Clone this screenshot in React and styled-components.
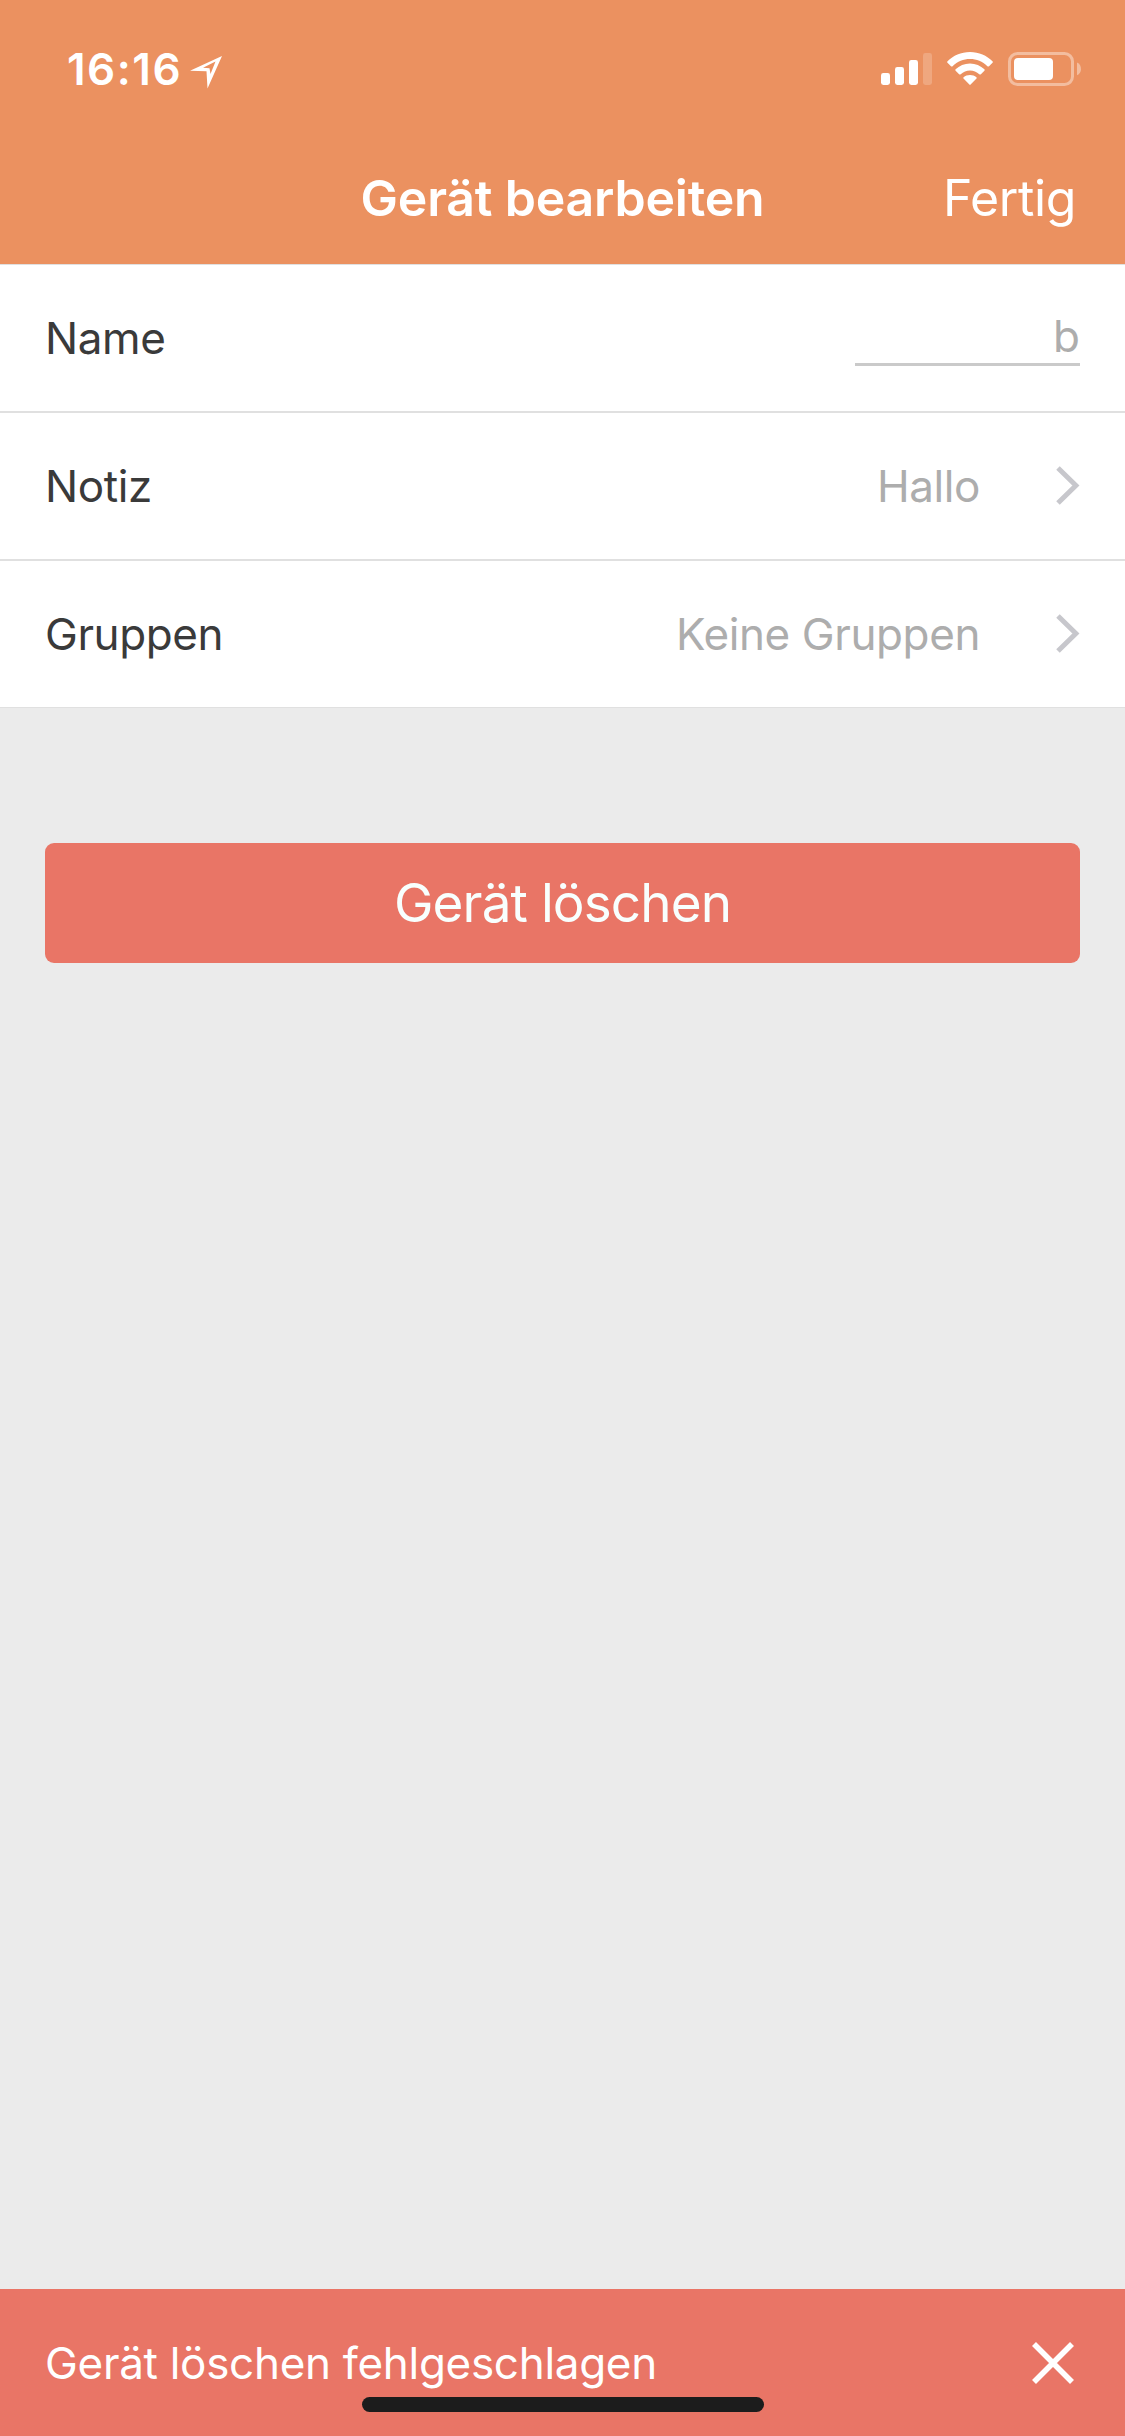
import React from 'react';
import styled, { createGlobalStyle, ThemeProvider } from "styled-components";

const theme = {
  colors: {
    header: '#eb9160',
    danger: '#e97566',
    page: '#ebebeb',
    line: '#e0e0e0',
    text: '#3a3a3a',
    value: '#adadad',
    chevron: '#c7c7cc',
  },
}

const GlobalStyle = createGlobalStyle`
  * {
    box-sizing: border-box;
  }
  body {
    margin: 0;
    font-family: Inter, "Liberation Sans", sans-serif;
    -webkit-font-smoothing: antialiased;
  }
`

const Screen = styled.div`
  display: flex;
  flex-direction: column;
  width: 1125px;
  height: 2436px;
  background: ${({ theme }) => theme.colors.page};
`

const Header = styled.header`
  height: 265px;
  color: #fff;
  background: ${({ theme }) => theme.colors.header};
  border-bottom: 1px solid ${({ theme }) => theme.colors.line};
`

const StatusBar = styled.div`
  display: flex;
  align-items: center;
  justify-content: space-between;
  height: 132px;
  padding: 6px 44px 0 67px;
`

const StatusTime = styled.div`
  display: flex;
  align-items: center;
  gap: 7px;
  font-size: 44px;
  font-weight: 600;
  line-height: 60px;
  letter-spacing: 1.5px;
`

const StatusIcons = styled.div`
  display: flex;
  align-items: center;
  gap: 15px;
`

const NavBar = styled.div`
  display: grid;
  grid-template-columns: 1fr auto 1fr;
  align-items: center;
  height: 132px;
  padding: 0 49px;
`

const NavTitle = styled.h1`
  grid-column: 2;
  margin: 0;
  font-size: 50px;
  font-weight: 600;
  line-height: 60px;
  letter-spacing: -0.2px;
`

const NavAction = styled.button`
  justify-self: end;
  padding: 0;
  border: none;
  background: none;
  color: inherit;
  font: inherit;
  font-size: 50px;
  line-height: 60px;
  letter-spacing: -0.4px;
`

const Row = styled.div`
  display: flex;
  align-items: center;
  height: 148px;
  padding: 0 45px;
  background: #fff;
  border-bottom: 2px solid ${({ theme }) => theme.colors.line};

  &:last-child {
    height: 147px;
    border-bottom-width: 1px;
  }
`

const RowLabel = styled.div`
  flex: 1;
  color: ${({ theme }) => theme.colors.text};
  font-size: 44px;
  line-height: 54px;
  letter-spacing: -0.4px;
`

const RowValue = styled.div`
  color: ${({ theme }) => theme.colors.value};
  font-size: 44px;
  line-height: 54px;
  letter-spacing: -0.4px;
  margin-right: 76px;
`

const RowInput = styled.input`
  width: 225px;
  height: 56px;
  padding: 0 0 2px;
  border: none;
  border-bottom: 3px solid #cacaca;
  outline: none;
  background: none;
  color: ${({ theme }) => theme.colors.value};
  font: inherit;
  font-size: 44px;
  text-align: right;
`

const DeleteButton = styled.button`
  height: 120px;
  margin: 135px 45px 0;
  padding: 0;
  border: none;
  border-radius: 9px;
  background: ${({ theme }) => theme.colors.danger};
  color: #f8fffe;
  font: inherit;
  font-size: 53px;
  letter-spacing: -0.9px;
`

const Toast = styled.div`
  position: relative;
  display: flex;
  align-items: center;
  justify-content: space-between;
  height: 147px;
  margin-top: auto;
  padding: 0 51px 0 45px;
  background: ${({ theme }) => theme.colors.danger};
  color: #fff;
  font-size: 44px;
  line-height: 54px;
  letter-spacing: -0.3px;
`

const HomeIndicator = styled.div`
  position: absolute;
  left: 362px;
  bottom: 24px;
  width: 402px;
  height: 15px;
  border-radius: 8px;
  background: #1c1c1c;
`

const Icon = styled.svg`
  display: block;
  flex: none;
`

const ArrowIcon = styled(Icon)`
  margin-top: 6px;
`

function LocationIcon() {
  return (
    <ArrowIcon width="34" height="34" viewBox="0 0 34 34">
      <path fill="#fff" fillRule="evenodd" d="M33 1 L1 15.8 L17.5 16.2 L18.5 33.5 Z M26.5 6.5 L14 12.8 L20.5 13.2 L21.5 19 Z" />
    </ArrowIcon>
  )
}

function SignalIcon() {
  return (
    <Icon width="51" height="34" viewBox="0 0 51 34" fill="#fff">
      <rect x="0" y="21" width="9" height="12" rx="2.4" />
      <rect x="14" y="15" width="9" height="18" rx="2.4" />
      <rect x="28" y="8" width="9" height="25" rx="2.4" />
      <rect x="42" y="1" width="9" height="32" rx="2.4" opacity="0.2" />
    </Icon>
  )
}

function WifiIcon() {
  return (
    <Icon width="46" height="34" viewBox="0 0 46 34" fill="#fff">
      <path d="M23 0 C32 0 39.8 3.6 45.5 9.2 Q46.2 10 45.5 10.8 L42 14.2 Q41.2 14.9 40.4 14.2 C35.5 9.5 29.6 7 23 7 C16.4 7 10.5 9.5 5.6 14.2 Q4.8 14.9 4 14.2 L0.5 10.8 Q-0.2 10 0.5 9.2 C6.2 3.6 14 0 23 0 Z" />
      <path d="M23 11.4 C28.6 11.4 33.6 13.6 37.4 17.2 Q38.1 17.9 37.4 18.7 L33.9 22.2 Q33.1 22.9 32.3 22.2 C29.7 19.8 26.5 18.4 23 18.4 C19.5 18.4 16.3 19.8 13.7 22.2 Q12.9 22.9 12.1 22.2 L8.6 18.7 Q7.9 17.9 8.6 17.2 C12.4 13.6 17.4 11.4 23 11.4 Z" />
      <path d="M23 22.9 C25.5 22.9 27.7 23.7 29.4 25.2 Q30.2 25.9 29.5 26.6 L23.6 32.6 Q23 33.2 22.4 32.6 L16.5 26.6 Q15.8 25.9 16.6 25.2 C18.3 23.7 20.5 22.9 23 22.9 Z" />
    </Icon>
  )
}

function BatteryIcon() {
  return (
    <Icon width="73" height="34" viewBox="0 0 73 34" fill="#fff">
      <rect x="1.5" y="1.5" width="63" height="31" rx="8" fill="none" stroke="#fff" strokeWidth="3" opacity="0.4" />
      <rect x="6" y="6" width="39" height="22" rx="4" />
      <path d="M69 10.5 C74.3 12.5 74.3 21.3 69 23.3 Z" opacity="0.4" />
    </Icon>
  )
}

function Chevron() {
  return (
    <Icon width="24" height="40" viewBox="0 0 24 40">
      <path d="M2 2 L19.9 19.5 L2 37" fill="none" stroke={theme.colors.chevron} strokeWidth="5" />
    </Icon>
  )
}

function CloseIcon() {
  return (
    <Icon width="42" height="42" viewBox="0 0 42 42">
      <path d="M2 2 L40 40 M40 2 L2 40" fill="none" stroke="#fff" strokeWidth="5.6" />
    </Icon>
  )
}

function App() {
  return (
    <ThemeProvider theme={theme}>
      <GlobalStyle />
      <Screen>
        <Header>
          <StatusBar>
            <StatusTime>16:16<LocationIcon /></StatusTime>
            <StatusIcons>
              <SignalIcon />
              <WifiIcon />
              <BatteryIcon />
            </StatusIcons>
          </StatusBar>
          <NavBar>
            <NavTitle>Gerät bearbeiten</NavTitle>
            <NavAction>Fertig</NavAction>
          </NavBar>
        </Header>

        <div>
          <Row>
            <RowLabel>Name</RowLabel>
            <RowInput defaultValue="b" />
          </Row>
          <Row>
            <RowLabel>Notiz</RowLabel>
            <RowValue>Hallo</RowValue>
            <Chevron />
          </Row>
          <Row>
            <RowLabel>Gruppen</RowLabel>
            <RowValue>Keine Gruppen</RowValue>
            <Chevron />
          </Row>
        </div>

        <DeleteButton>Gerät löschen</DeleteButton>

        <Toast>
          Gerät löschen fehlgeschlagen
          <CloseIcon />
          <HomeIndicator />
        </Toast>
      </Screen>
    </ThemeProvider>
  )
}

export default App
